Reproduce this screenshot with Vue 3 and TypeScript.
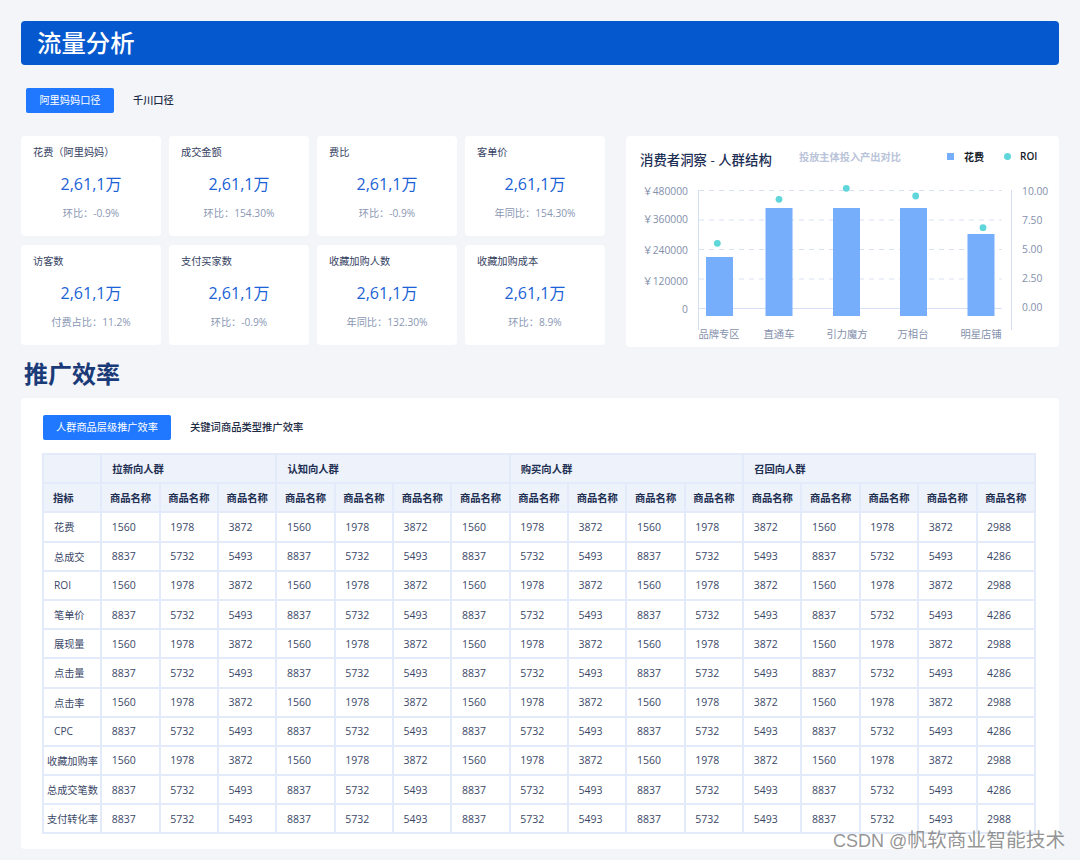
<script setup lang="ts">
interface Kpi { label: string; value: string; note: string }
const kpis: Kpi[] = [
  { label: '花费（阿里妈妈）', value: '2,61,1万', note: '环比：-0.9%' },
  { label: '成交金额', value: '2,61,1万', note: '环比：154.30%' },
  { label: '费比', value: '2,61,1万', note: '环比：-0.9%' },
  { label: '客单价', value: '2,61,1万', note: '年同比：154.30%' },
  { label: '访客数', value: '2,61,1万', note: '付费占比：11.2%' },
  { label: '支付买家数', value: '2,61,1万', note: '环比：-0.9%' },
  { label: '收藏加购人数', value: '2,61,1万', note: '年同比：132.30%' },
  { label: '收藏加购成本', value: '2,61,1万', note: '环比：8.9%' },
]
const gridYs = [190.5, 220, 249.5, 279]
const bars = [
  { x: 706, top: 257, dx: 717.3, dy: 243.3, name: '品牌专区', cx: 719 },
  { x: 765.5, top: 208, dx: 779, dy: 199.3, name: '直通车', cx: 779 },
  { x: 833, top: 208, dx: 846.3, dy: 188.3, name: '引力魔方', cx: 847 },
  { x: 900, top: 208, dx: 915.7, dy: 196, name: '万相台', cx: 913 },
  { x: 967.5, top: 234, dx: 983, dy: 227.7, name: '明星店铺', cx: 981 },
]
const leftTicks = [
  { t: '￥480000', y: 191 }, { t: '￥360000', y: 219 }, { t: '￥240000', y: 250 }, { t: '￥120000', y: 281 }, { t: '0', y: 309 },
]
const rightTicks = [
  { t: '10.00', y: 191 }, { t: '7.50', y: 220 }, { t: '5.00', y: 249 }, { t: '2.50', y: 278 }, { t: '0.00', y: 307 },
]
const groups = [
  { name: '拉新向人群', span: 3 }, { name: '认知向人群', span: 4 }, { name: '购买向人群', span: 4 }, { name: '召回向人群', span: 5 },
]
const odd = ['1560', '1978', '3872', '1560', '1978', '3872', '1560', '1978', '3872', '1560', '1978', '3872', '1560', '1978', '3872', '2988']
const even = ['8837', '5732', '5493', '8837', '5732', '5493', '8837', '5732', '5493', '8837', '5732', '5493', '8837', '5732', '5493', '4286']
const last = [...even.slice(0, 15), '2988']
const rows = [
  { name: '花费', cells: odd }, { name: '总成交', cells: even }, { name: 'ROI', cells: odd }, { name: '笔单价', cells: even },
  { name: '展现量', cells: odd }, { name: '点击量', cells: even }, { name: '点击率', cells: odd }, { name: 'CPC', cells: even },
  { name: '收藏加购率', cells: odd }, { name: '总成交笔数', cells: even }, { name: '支付转化率', cells: last },
]
</script>

<template>
  <div class="page">
    <h1 class="banner">流量分析</h1>
    <div class="tabs top-tabs">
      <span class="tab active">阿里妈妈口径</span>
      <span class="tab">千川口径</span>
    </div>
    <div class="overview">
      <div class="kpis">
        <div v-for="k in kpis" :key="k.label" class="kpi">
          <div class="kpi-label">{{ k.label }}</div>
          <div class="kpi-value">{{ k.value }}</div>
          <div class="kpi-note">{{ k.note }}</div>
        </div>
      </div>
      <div class="chart-card">
        <div class="chart-head">
          <span class="chart-title">消费者洞察 - 人群结构</span>
          <span class="chart-sub">投放主体投入产出对比</span>
          <span class="legend"><i class="sq"></i>花费</span>
          <span class="legend roi"><i class="dot"></i>ROI</span>
        </div>
        <svg class="chart" viewBox="626 180 433 167" width="433" height="167">
          <line v-for="y in gridYs" :key="y" x1="699" x2="1002" :y1="y" :y2="y" stroke="#d9e0ef" stroke-dasharray="5 5" />
          <line x1="698.5" x2="698.5" y1="190" y2="330" stroke="#d5def0" />
          <line x1="1011.5" x2="1011.5" y1="190" y2="330" stroke="#d5def0" />
          <line x1="699" x2="1002" y1="308.5" y2="308.5" stroke="#d5e1f6" />
          <rect v-for="b in bars" :key="b.name" :x="b.x" :y="b.top" width="27" :height="316 - b.top" fill="#76aefc" />
          <circle v-for="b in bars" :key="'d' + b.name" :cx="b.dx" :cy="b.dy" r="3.4" fill="#5fd6d9" />
          <text v-for="t in leftTicks" :key="t.t" x="688" :y="t.y + 4" text-anchor="end" class="tick">{{ t.t }}</text>
          <text v-for="t in rightTicks" :key="t.t" x="1022" :y="t.y + 4" class="tick">{{ t.t }}</text>
          <text v-for="b in bars" :key="'n' + b.name" :x="b.cx" y="338" text-anchor="middle" class="tick">{{ b.name }}</text>
        </svg>
      </div>
    </div>
    <h2 class="section-title">推广效率</h2>
    <div class="panel">
      <div class="tabs inner-tabs">
        <span class="tab active wide">人群商品层级推广效率</span>
        <span class="tab plain">关键词商品类型推广效率</span>
      </div>
      <table class="grid">
        <thead>
          <tr class="h1">
            <th class="first"></th>
            <th v-for="g in groups" :key="g.name" :colspan="g.span" class="group">{{ g.name }}</th>
          </tr>
          <tr class="h2">
            <th class="first metric">指标</th>
            <th v-for="n in 16" :key="n">商品名称</th>
          </tr>
        </thead>
        <tbody>
          <tr v-for="r in rows" :key="r.name">
            <td class="name" :class="{ long: r.name.length >= 5 }">{{ r.name }}</td>
            <td v-for="(c, i) in r.cells" :key="i">{{ c }}</td>
          </tr>
        </tbody>
      </table>
    </div>
    <div class="watermark">CSDN @<span class="wm-cjk">帆软商业智能技术</span></div>
  </div>
</template>

<style scoped>
.page {
  position: relative;
  width: 1080px;
  height: 860px;
  box-sizing: border-box;
  padding: 21px 21px 0;
  background: #f3f5f9;
  font-family: "Open Sans", "Noto Sans CJK SC", sans-serif;
  overflow: hidden;
  color: #2b3a5c;
}
.banner {
  margin: 0;
  height: 44px;
  line-height: 44px;
  padding-left: 16px;
  background: #0558cd;
  border-radius: 4px;
  color: #fff;
  font-size: 24.4px;
  font-weight: 500;
}
.tabs { display: flex; align-items: center; }
.top-tabs { margin: 23px 0 23px 5px; }
.tab {
  height: 25px;
  line-height: 25px;
  font-size: 10.2px;
  font-weight: 500;
  color: #1c2a44;
  padding: 0 19px;
}
.tab.active {
  width: 88px;
  box-sizing: border-box;
  padding: 0;
  text-align: center;
  background: #1f78ff;
  color: #fff;
  border-radius: 2px;
  font-weight: 400;
}
.overview { display: flex; gap: 21px; }
.kpis {
  display: grid;
  grid-template-columns: repeat(4, 140px);
  grid-auto-rows: 100px;
  gap: 9px 8px;
}
.kpi {
  background: #fff;
  border-radius: 4px;
  padding: 9px 12px 0;
  text-align: center;
}
.kpi-label { text-align: left; font-size: 10.2px; line-height: 14px; color: #35425f; }
.kpi-value { margin-top: 13px; font-size: 16px; line-height: 24px; color: #1a62d6; }
.kpi-note { margin-top: 10px; font-size: 10.2px; line-height: 14px; color: #8a97b3; }
.chart-card {
  width: 433px;
  height: 211px;
  background: #fff;
  border-radius: 4px;
}
.chart-head {
  display: flex;
  align-items: center;
  height: 44px;
  padding-left: 14px;
}
.chart-title { font-size: 13.4px; font-weight: 500; color: #1d2f55; width: 159px; white-space: nowrap; margin-top: 2px; }
.chart-sub { font-size: 10.2px; font-weight: 700; color: #b9c3d9; width: 148px; margin-top: -4px; }
.legend { display: flex; align-items: center; font-size: 10px; font-weight: 600; color: #141a28; margin-top: -4px; }
.sq { width: 7px; height: 7px; background: #76aefc; margin-right: 10px; }
.dot { width: 7px; height: 7px; border-radius: 50%; background: #5fd6d9; margin-right: 9px; }
.roi { margin-left: 20px; }
.chart { display: block; }
.tick { font-size: 10.3px; fill: #8490ac; }
.section-title {
  margin: 10px 0 7px 3px;
  font-size: 24px;
  line-height: 34px;
  font-weight: 700;
  color: #1a3a78;
}
.panel {
  height: 451px;
  box-sizing: border-box;
  background: #fff;
  border-radius: 4px;
  padding: 17px 0 0 21px;
}
.inner-tabs { margin: 0 0 13px 1px; }
.tab.wide { width: 128px; }
.tab.plain { padding-left: 19px; font-size: 10.3px; }
.grid {
  width: 994px;
  table-layout: fixed;
  border-collapse: collapse;
  font-size: 10.3px;
}
.grid th, .grid td {
  border: 2px solid #e3ebfb;
  padding: 0;
  height: 29.2px;
  box-sizing: border-box;
}
.grid thead th {
  background: #edf2fb;
  font-weight: 700;
  color: #1e2f52;
  text-align: center;
}
.grid .group { text-align: left; padding-left: 10px; }
.grid .metric { text-align: left; padding-left: 9px; }
.grid td { padding-left: 9.5px; color: #3b4868; font-size: 10.5px; }
.grid td.name { padding-left: 10px; font-size: 10.2px; white-space: nowrap; }
.grid td.name.long { padding-left: 3px; }
.watermark {
  position: absolute;
  left: 833px;
  top: 827px;
  font-family: "Liberation Sans", "Noto Sans CJK SC", sans-serif;
  font-size: 18px;
  line-height: 26px;
  color: rgba(130, 130, 130, 0.85);
  white-space: nowrap;
}
.wm-cjk { font-size: 19.75px; }
</style>
